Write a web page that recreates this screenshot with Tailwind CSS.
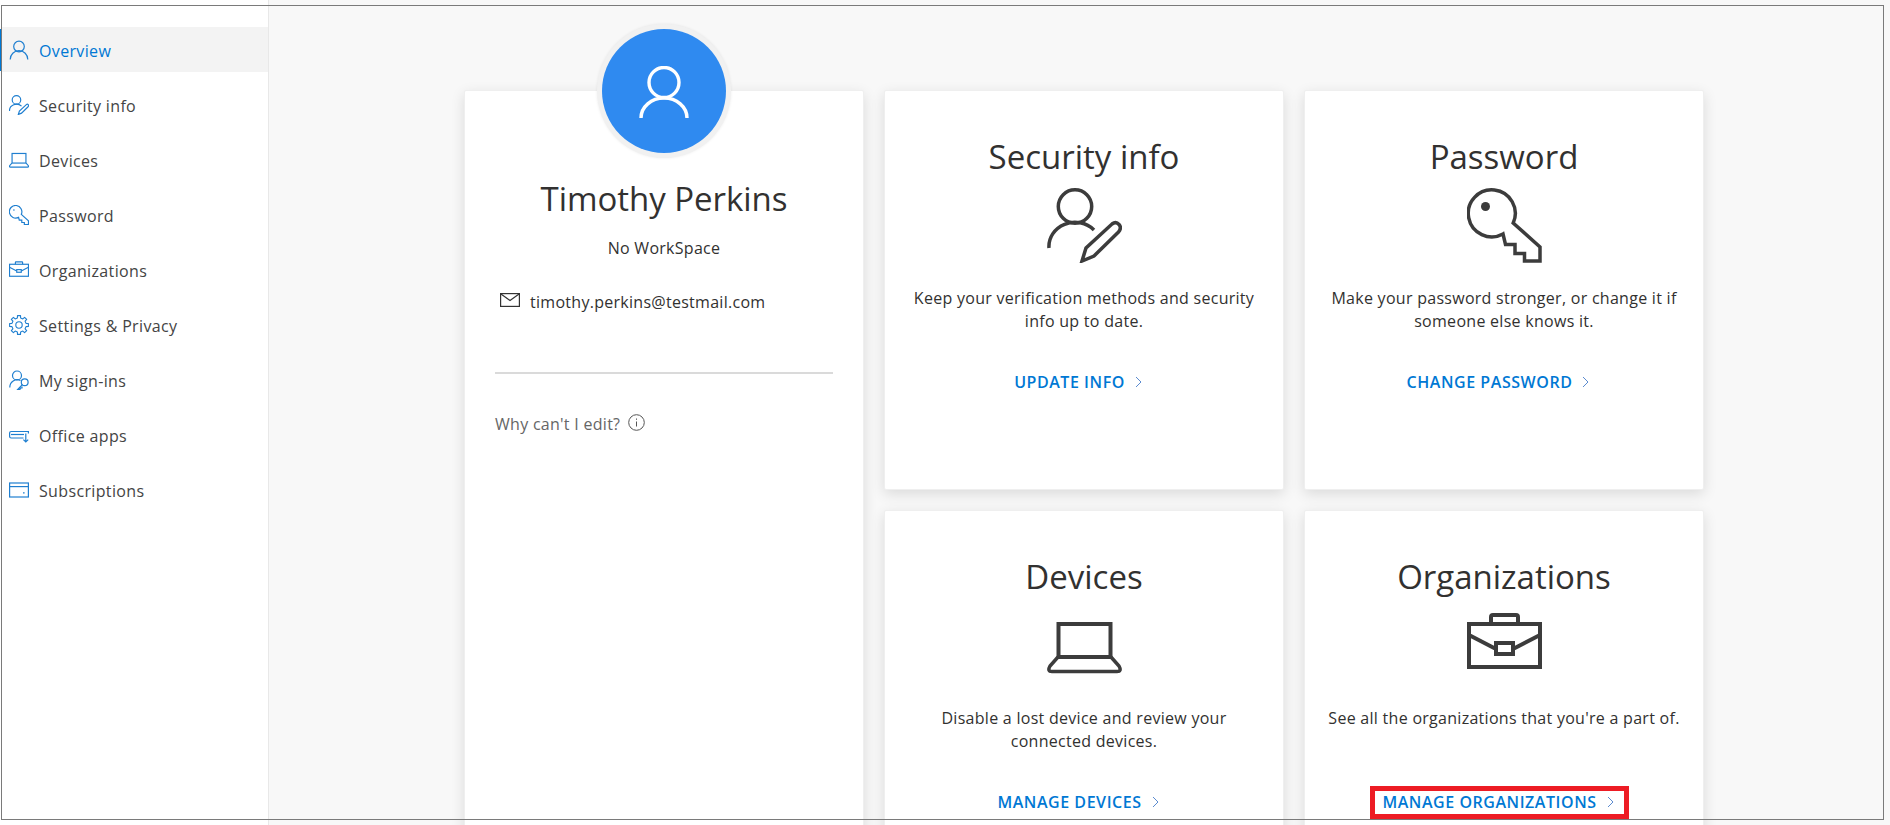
<!DOCTYPE html>
<html lang="en">
<head>
    <meta charset="UTF-8">
    <title>My Account</title>
    <script src="https://cdn.jsdelivr.net/npm/@tailwindcss/browser@4"></script>
</head>
<body class="bg-[#f8f8f8] font-['Open_Sans',sans-serif] text-[#323130] text-[16px] tracking-[0.28px]">
<div class="relative h-[825px] overflow-hidden flex">

    <!-- Sidebar -->
    <nav class="w-[269px] shrink-0 h-full bg-white border-r border-[#e8e8e8] pt-[27px] flex flex-col gap-[10px] text-[#444444] tracking-[0.35px]">
        <a class="relative h-[45px] ml-[2px] flex items-center gap-[10px] pl-[7px] bg-[#f3f3f3] text-[#0078d4]">
            <span class="absolute left-[-2px] top-[2px] w-[2px] h-[42px] bg-[#0078d4]"></span>
            <svg class="w-5 h-5" viewBox="0 0 20 20" fill="none" stroke="#1f7fd0" stroke-width="1.2"><circle cx="10" cy="6.5" r="5.3"/><path d="M1.2 19.5A8.8 8.8 0 0 1 18.8 19.5"/></svg>
            <span class="mt-[2px]">Overview</span>
        </a>
        <a class="h-[45px] ml-[2px] flex items-center gap-[10px] pl-[7px]">
            <svg class="w-5 h-5" viewBox="0 0 75 75" fill="none" stroke="#1f7fd0" stroke-width="4.4"><circle cx="28" cy="18.5" r="16"/><path d="M2 60A26 24 0 0 1 47 42"/><path d="M35 73L39 60L65 36Q69 33 72 36.5Q75 40 71.5 44L47 68Z"/></svg>
            <span class="mt-[2px]">Security info</span>
        </a>
        <a class="h-[45px] ml-[2px] flex items-center gap-[10px] pl-[7px]">
            <svg class="w-5 h-5" viewBox="0 0 75 75" fill="none" stroke="#1f7fd0" stroke-width="4.4"><rect x="11.5" y="13" width="52" height="36"/><path d="M11 49L3 58Q0 64 5 64H70Q75 64 72 58L64 49"/></svg>
            <span class="mt-[2px]">Devices</span>
        </a>
        <a class="h-[45px] ml-[2px] flex items-center gap-[10px] pl-[7px]">
            <svg class="w-5 h-5" viewBox="0 0 75 75" fill="none" stroke="#1f7fd0" stroke-width="4.4"><path d="M36 46A23.5 23.5 0 1 1 46.2 35L73 59V73H57.5V65.5H48V56.5H38.5Z"/><circle cx="18.5" cy="18.5" r="3" fill="#1f7fd0" stroke="none"/></svg>
            <span class="mt-[2px]">Password</span>
        </a>
        <a class="h-[45px] ml-[2px] flex items-center gap-[10px] pl-[7px]">
            <svg class="w-5 h-5" viewBox="0 0 75 75" fill="none" stroke="#1f7fd0" stroke-width="4.4"><rect x="2" y="16" width="71" height="45"/><path d="M24 16V9Q24 7 26 7H49Q51 7 51 9V16"/><path d="M2 27L29 41M73 27L46 41"/><rect x="29" y="36" width="17" height="10"/></svg>
            <span class="mt-[2px]">Organizations</span>
        </a>
        <a class="h-[45px] ml-[2px] flex items-center gap-[10px] pl-[7px]">
            <svg class="w-5 h-5" viewBox="0 0 20 20" fill="none" stroke="#1f7fd0" stroke-width="1.1" stroke-linejoin="round"><path d="M8.38 2.98L8.51 .62H11.49L11.62 2.98L13.82 3.89L15.58 2.31L17.69 4.42L16.11 6.18L17.02 8.38L19.38 8.51V11.49L17.02 11.62L16.11 13.82L17.69 15.58L15.58 17.69L13.82 16.11L11.62 17.02L11.49 19.38H8.51L8.38 17.02L6.18 16.11L4.42 17.69L2.31 15.58L3.89 13.82L2.98 11.62L.62 11.49V8.51L2.98 8.38L3.89 6.18L2.31 4.42L4.42 2.31L6.18 3.89Z"/><circle cx="10" cy="10" r="3.2"/></svg>
            <span class="mt-[2px]">Settings &amp; Privacy</span>
        </a>
        <a class="h-[45px] ml-[2px] flex items-center gap-[10px] pl-[7px]">
            <svg class="w-5 h-5" viewBox="0 0 20 20" fill="none" stroke="#1f7fd0" stroke-width="1.2"><circle cx="8" cy="5.5" r="4.5"/><path d="M.8 17.5A7.5 7.5 0 0 1 11.5 10.5"/><circle cx="15.7" cy="12.3" r="3.4"/><path d="M13.3 14.7L8.8 19.3H11L11.5 18H13V16.5"/></svg>
            <span class="mt-[2px]">My sign-ins</span>
        </a>
        <a class="h-[45px] ml-[2px] flex items-center gap-[10px] pl-[7px]">
            <svg class="w-5 h-5" viewBox="0 0 20 20" fill="none" stroke="#1f7fd0" stroke-width="1.2"><path d="M19.4 8.5V6.5H2.2Q.6 6.5 .6 8V11.5Q.6 13 2.2 13H14.5"/><path d="M2 9.5H15"/><path d="M16.8 8.5V17M14.4 14.6L16.8 17L19.2 14.6"/></svg>
            <span class="mt-[2px]">Office apps</span>
        </a>
        <a class="h-[45px] ml-[2px] flex items-center gap-[10px] pl-[7px]">
            <svg class="w-5 h-5" viewBox="0 0 20 20" fill="none" stroke="#1f7fd0" stroke-width="1.2"><rect x=".6" y="3" width="18.8" height="14"/><path d="M.6 6.6H19.4"/><path d="M14 12.8H15.6"/></svg>
            <span class="mt-[2px]">Subscriptions</span>
        </a>
    </nav>

    <!-- Cards -->
    <main class="flex-1 pl-[195px] pt-[90px]">
        <div class="grid grid-cols-[400px_400px_400px] grid-rows-[400px_400px] gap-[20px]">

            <section class="relative row-span-2 bg-white border border-[#efefef] rounded-[2px] shadow-[0_4px_14px_rgba(0,0,0,0.12)] px-[30px] pt-[86px]">
                <div class="absolute left-[132px] top-[-67px] w-[134px] h-[134px] rounded-full bg-[#f1f1f1] shadow-[0_0_3px_rgba(0,0,0,0.08)] flex items-center justify-center">
                    <div class="w-[124px] h-[124px] rounded-full bg-[#2f8af0] flex items-center justify-center">
                        <svg class="w-[50px] h-[52px] mt-[2px]" viewBox="0 0 50 52" fill="none" stroke="white" stroke-width="3.4"><circle cx="25" cy="16.5" r="15"/><path d="M2 52A23 20 0 0 1 48 52"/></svg>
                    </div>
                </div>
                <h1 class="text-[33px] leading-[44px] tracking-[-0.05px] text-center">Timothy Perkins</h1>
                <p class="mt-[15px] leading-[24px] text-center">No WorkSpace</p>
                <div class="mt-[30px] ml-[5px] flex items-center gap-[10px] leading-[24px]">
                    <svg class="w-5 h-[14px] mt-[-4px]" viewBox="0 0 20 14" fill="none" stroke="#333" stroke-width="1.2"><rect x=".6" y=".6" width="18.8" height="12.8"/><path d="M.6 .8L10 7.5L19.4 .8"/></svg>
                    timothy.perkins@testmail.com
                </div>
                <div class="mt-[58px] h-[2px] bg-[#dadada]"></div>
                <div class="mt-[38px] flex items-center gap-[8px] leading-[24px] text-[#666666]">
                    Why can't I edit?
                    <svg class="w-[17px] h-[17px] mt-[-4px]" viewBox="0 0 17 17" fill="none" stroke="#555" stroke-width="1"><circle cx="8.5" cy="8.5" r="7.8"/><path d="M8.5 7.5V12.5M8.5 4.5V5.8"/></svg>
                </div>
            </section>

            <section class="bg-white border border-[#efefef] rounded-[2px] shadow-[0_4px_14px_rgba(0,0,0,0.12)] flex flex-col items-center pt-[44px]">
                <h2 class="text-[33px] leading-[44px] tracking-[0px]">Security info</h2>
                <svg class="mt-[9px] w-[75px] h-[75px]" viewBox="0 0 75 75" fill="none" stroke="#3c3c3c" stroke-width="3.5"><circle cx="28" cy="18.5" r="16.7"/><path d="M2 60A26 24 0 0 1 47 42"/><path d="M35 73L39 60L65 36Q69 33 72 36.5Q75 40 71.5 44L47 68Z"/></svg>
                <p class="mt-[24px] h-[46px] leading-[23px] text-center">Keep your verification methods and security<br>info up to date.</p>
                <a class="mt-[37px] mr-[12px] flex items-center gap-[10px] leading-[24px] font-semibold tracking-[0.55px] text-[#0078d4]">UPDATE INFO <svg class="w-[7px] h-[12px]" viewBox="0 0 7 12" fill="none" stroke="#5b8bd0"><path d="M1 1L6 6L1 11"/></svg></a>
            </section>

            <section class="bg-white border border-[#efefef] rounded-[2px] shadow-[0_4px_14px_rgba(0,0,0,0.12)] flex flex-col items-center pt-[44px]">
                <h2 class="text-[33px] leading-[44px] tracking-[0px]">Password</h2>
                <svg class="mt-[9px] w-[75px] h-[75px]" viewBox="0 0 75 75" fill="none" stroke="#3c3c3c" stroke-width="3.5"><path d="M36 46A23.5 23.5 0 1 1 46.2 35L73 59V73H57.5V65.5H48V56.5H38.5Z"/><circle cx="18.5" cy="18.5" r="4.5" fill="#3c3c3c" stroke="none"/></svg>
                <p class="mt-[24px] h-[46px] leading-[23px] text-center">Make your password stronger, or change it if<br>someone else knows it.</p>
                <a class="mt-[37px] mr-[12px] flex items-center gap-[10px] leading-[24px] font-semibold tracking-[0.55px] text-[#0078d4]">CHANGE PASSWORD <svg class="w-[7px] h-[12px]" viewBox="0 0 7 12" fill="none" stroke="#5b8bd0"><path d="M1 1L6 6L1 11"/></svg></a>
            </section>

            <section class="bg-white border border-[#efefef] rounded-[2px] shadow-[0_4px_14px_rgba(0,0,0,0.12)] flex flex-col items-center pt-[44px]">
                <h2 class="text-[33px] leading-[44px] tracking-[0px]">Devices</h2>
                <svg class="mt-[9px] w-[75px] h-[75px]" viewBox="0 0 75 75" fill="none" stroke="#3c3c3c" stroke-width="4"><rect x="11.5" y="16" width="52" height="33"/><path stroke-width="3.5" d="M11 49L3 58Q0 63.5 5 63.5H70Q75 63.5 72 58L64 49"/></svg>
                <p class="mt-[24px] h-[46px] leading-[23px] text-center">Disable a lost device and review your<br>connected devices.</p>
                <a class="mt-[37px] mr-[12px] flex items-center gap-[10px] leading-[24px] font-semibold tracking-[0.55px] text-[#0078d4]">MANAGE DEVICES <svg class="w-[7px] h-[12px]" viewBox="0 0 7 12" fill="none" stroke="#5b8bd0"><path d="M1 1L6 6L1 11"/></svg></a>
            </section>

            <section class="bg-white border border-[#efefef] rounded-[2px] shadow-[0_4px_14px_rgba(0,0,0,0.12)] flex flex-col items-center pt-[44px]">
                <h2 class="text-[33px] leading-[44px] tracking-[0px]">Organizations</h2>
                <svg class="mt-[9px] w-[75px] h-[75px]" viewBox="0 0 75 75" fill="none" stroke="#3c3c3c" stroke-width="4"><rect x="2" y="16" width="71" height="43"/><path d="M24 16V9Q24 7 26 7H49Q51 7 51 9V16"/><path d="M2 27L29 41M73 27L46 41"/><rect x="29" y="35" width="17" height="11"/></svg>
                <p class="mt-[24px] h-[46px] leading-[23px] text-center">See all the organizations that you're a part of.</p>
                <a class="relative mt-[37px] mr-[12px] flex items-center gap-[10px] leading-[24px] font-semibold tracking-[0.55px] text-[#0078d4]">MANAGE ORGANIZATIONS <svg class="w-[7px] h-[12px]" viewBox="0 0 7 12" fill="none" stroke="#5b8bd0"><path d="M1 1L6 6L1 11"/></svg>
                    <span class="absolute left-[-12px] right-[-15px] top-[-4px] bottom-[-5px] border-[5px] border-[#ed1c24]"></span>
                </a>
            </section>
        </div>
    </main>

    <!-- Screenshot frame -->
    <div class="absolute left-[1px] top-[5px] w-[1883px] h-[815px] border border-[#7a7a7a] pointer-events-none"></div>
</div>
</body>
</html>
